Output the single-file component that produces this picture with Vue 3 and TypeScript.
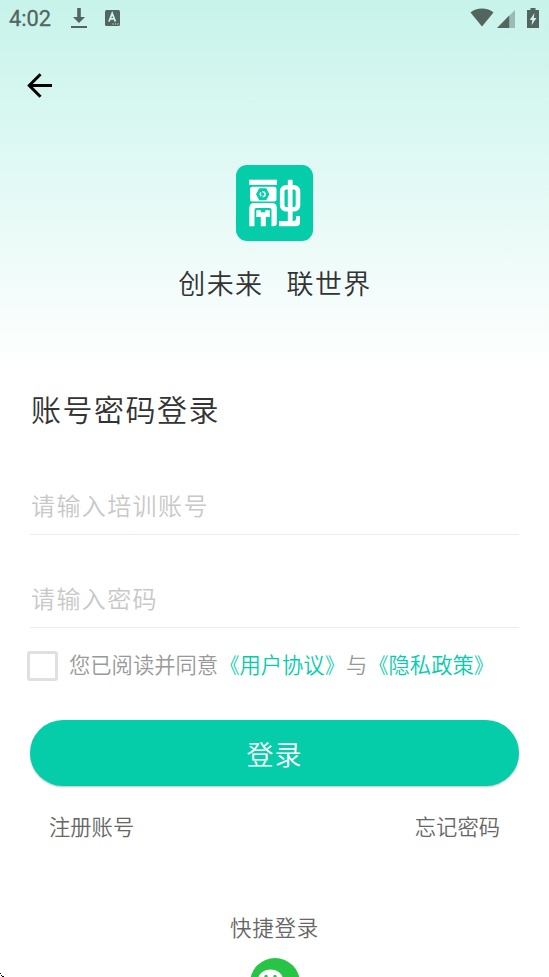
<script setup lang="ts">
import { ref } from 'vue'

const account = ref('')
const password = ref('')
const agreed = ref(false)
</script>

<template>
  <main class="screen">
    <header class="status">
      <span class="clock">4:02</span>
      <svg class="download" width="16" height="20" viewBox="0 0 16 20">
        <path d="M6.2 0h3.6v9H14L8 15 2 9h4.2zM0 18h16v2H0z" />
      </svg>
      <svg class="keyboard" width="15" height="16" viewBox="0 0 15 16">
        <rect width="15" height="16" rx="1.500" />
        <path class="mark" d="M4 11.5 7.2 3.5l3.2 8M5.2 8.8h4" />
        <path class="dots" d="M7.5 14h1.200M10 14h1.200M12.500 14h1.200" />
      </svg>
      <span class="spacer"></span>
      <svg class="wifi" width="24" height="19" viewBox="0 0 24 19">
        <path d="M12 18.5.5 4.5C3.500 2 7.500.5 12 .5s8.500 1.500 11.500 4z" />
      </svg>
      <svg class="signal" width="18" height="18" viewBox="0 0 18 18">
        <path opacity=".4" d="M12 6l6-6v18h-6z" />
        <path d="M0 18 12.200 5.500V18z" />
      </svg>
      <svg class="battery" width="12" height="20" viewBox="0 0 12 20">
        <path d="M3.500 0h5v2H12v18H0V2h3.500z" />
        <path class="bolt" d="M7.500 5 2.700 12h2.600l-.8 5.300L9.500 10H6.800z" />
      </svg>
    </header>

    <nav class="nav">
      <button class="back" type="button" aria-label="返回">
        <svg width="25" height="26" viewBox="0 0 25 26">
          <path d="M25 13.500H2.500M13.500 2.300 2.300 13.500l11.200 11.200" />
        </svg>
      </button>
    </nav>

    <section class="brand">
      <svg class="logo" width="77" height="76" viewBox="0 0 77 76">
        <rect width="77" height="76" rx="11" fill="#05cdaa" />
        <g fill="#fff">
          <rect x="13" y="14.700" width="28" height="5.200" />
          <rect x="14" y="21.700" width="26.500" height="14.800" rx="2.500" />
          <path d="M13.300 61.300V43q0-5 5-5h17.500q5 0 5 5v15q0 3.300-3.300 3.300h-2V45q0-2-2-2h-13q-2 0-2 2v16.300z" />
          <path d="M20.300 45.300h4.500v2h4.500v-2h4.500v6.700h-4v9.300h-5v-9.300h-4.500z" />
          <rect x="51.800" y="14.700" width="4.800" height="43" rx="1" />
          <path d="M43 56h14.500q2.500 0 2.500-2.500V51h4v6.300q0 4-4 4H43z" />
        </g>
        <rect x="46.200" y="22.200" width="15.800" height="22" rx="4" fill="none" stroke="#fff" stroke-width="4.600" />
        <path d="M20 29.200l3.200-6h7l3.200 6-3.200 6h-7z" fill="#05cdaa" />
        <circle cx="26.700" cy="29.200" r="2.400" fill="none" stroke="#fff" stroke-width="1.500" stroke-dasharray="3.600 1.300" />
      </svg>
      <p class="slogan"><span>创未来</span><span>联世界</span></p>
    </section>

    <form class="login" @submit.prevent>
      <h1>账号密码登录</h1>
      <input v-model="account" class="account" type="text" placeholder="请输入培训账号" />
      <input v-model="password" class="password" type="password" placeholder="请输入密码" />
      <label class="agreement">
        <input v-model="agreed" type="checkbox" />
        <span class="terms">您已阅读并同意<a><b class="open">《</b>用户协议<b class="close">》</b></a>与<a><b class="open">《</b>隐私政策<b class="close">》</b></a></span>
      </label>
      <button class="submit" type="submit">登录</button>
      <div class="links"><a>注册账号</a><a>忘记密码</a></div>
    </form>

    <footer class="quick">
      <p>快捷登录</p>
      <svg width="50" height="50" viewBox="0 0 50 50">
        <circle cx="25" cy="25" r="25" fill="#28c445" />
        <ellipse cx="20.500" cy="22" rx="12.500" ry="10.500" fill="#fff" />
        <circle cx="16" cy="18.500" r="1.700" fill="#28c445" />
        <circle cx="25" cy="18.500" r="1.700" fill="#28c445" />
        <ellipse cx="31" cy="30" rx="10" ry="8.500" fill="#fff" />
      </svg>
    </footer>
    <svg class="corner" width="4" height="4" viewBox="0 0 4 4" shape-rendering="crispEdges">
      <path d="M0 0h1v1H0zM1 2h1v1H1zM2 3h2v1H2z" />
    </svg>
  </main>
</template>

<style>
body {
  margin: 0;
  overflow: hidden;
}
</style>

<style scoped>
.screen {
  position: relative;
  box-sizing: border-box;
  height: 977px;
  overflow: hidden;
  background: linear-gradient(#c7f3ea 0, #d8f7f1 110px, #fff 370px);
  font-family: "Noto Sans CJK SC", sans-serif;
  font-weight: 350;
  color: #333;
}
p,
h1 {
  margin: 0;
  font-weight: inherit;
}
button,
input {
  box-sizing: border-box;
  margin: 0;
  padding: 0;
  border: 0;
  font: inherit;
  background: none;
  outline: none;
}
.status {
  display: flex;
  align-items: flex-start;
  box-sizing: border-box;
  height: 38px;
  padding: 8px 10px 0 9px;
  fill: #52665f;
}
.clock {
  width: 62px;
  font: 400 21.800px/22px Roboto, sans-serif;
  -webkit-text-stroke: 0.300px #52665f;
  color: #52665f;
}
.keyboard {
  margin: 2px 0 0 18px;
}
.mark,
.dots {
  fill: none;
  stroke: #cbf4eb;
  stroke-width: 1.800;
}
.dots {
  stroke-width: 1.200;
}
.spacer {
  flex: 1;
}
.signal {
  margin: 2px 12px 0 3px;
}
.bolt {
  fill: #cbf4eb;
}
.nav {
  height: 127px;
}
.back {
  display: block;
  margin: 0 0 0 27px;
  padding-top: 34px;
}
.back svg {
  display: block;
  fill: none;
  stroke: #000;
  stroke-width: 3;
}
.brand {
  display: flex;
  flex-direction: column;
  align-items: center;
  height: 218px;
}
.logo {
  display: block;
}
.slogan {
  display: flex;
  gap: 23px;
  margin-top: 22px;
  padding-left: 1px;
  font-size: 27px;
  line-height: 40px;
  letter-spacing: 1.400px;
}
.login {
  display: flex;
  flex-direction: column;
  padding: 0 30px;
}
h1 {
  height: 50px;
  padding-left: 1px;
  font-size: 30px;
  line-height: 50px;
  letter-spacing: 1.500px;
}
.account,
.password {
  height: 58px;
  border-bottom: 1px solid #ececec;
  padding: 0 0 2px 1px;
  font-size: 24px;
  letter-spacing: 1.400px;
}
.account {
  margin-top: 44px;
}
.password {
  margin-top: 35px;
}
.account::placeholder,
.password::placeholder {
  color: #c8c8c8;
}
.agreement {
  display: flex;
  align-items: center;
  height: 30px;
  margin: 23px 0 0 -3px;
  font-size: 21.300px;
  line-height: 30px;
  white-space: nowrap;
  color: #999;
}
.terms {
  height: 34px;
}
.terms b {
  display: inline-block;
  font-weight: inherit;
}
.open {
  transform: scaleX(0.9);
  transform-origin: right;
}
.close {
  transform: scaleX(0.9);
  transform-origin: left;
}
.agreement input {
  appearance: none;
  width: 31px;
  height: 30px;
  margin-right: 11px;
  border: 3px solid #e0e0e0;
  border-radius: 3px;
}
.agreement a {
  color: #05cdaa;
}
.submit {
  height: 66px;
  margin-top: 39px;
  border-radius: 33px;
  background: #05cdaa;
  box-shadow: 0 1px 2px rgba(0, 0, 0, 0.25);
  font-size: 27px;
  letter-spacing: 1px;
  color: #fff;
}
.links {
  display: flex;
  justify-content: space-between;
  margin-top: 25px;
  padding: 0 19px;
  font-size: 21.300px;
  line-height: 30px;
  color: #666;
}
.quick {
  display: flex;
  flex-direction: column;
  align-items: center;
  margin-top: 71px;
  font-size: 21.500px;
  line-height: 30px;
  letter-spacing: 0.700px;
  color: #666;
}
.quick svg {
  margin-top: 16px;
}
.corner {
  position: absolute;
  bottom: 0;
  left: 0;
}
</style>
